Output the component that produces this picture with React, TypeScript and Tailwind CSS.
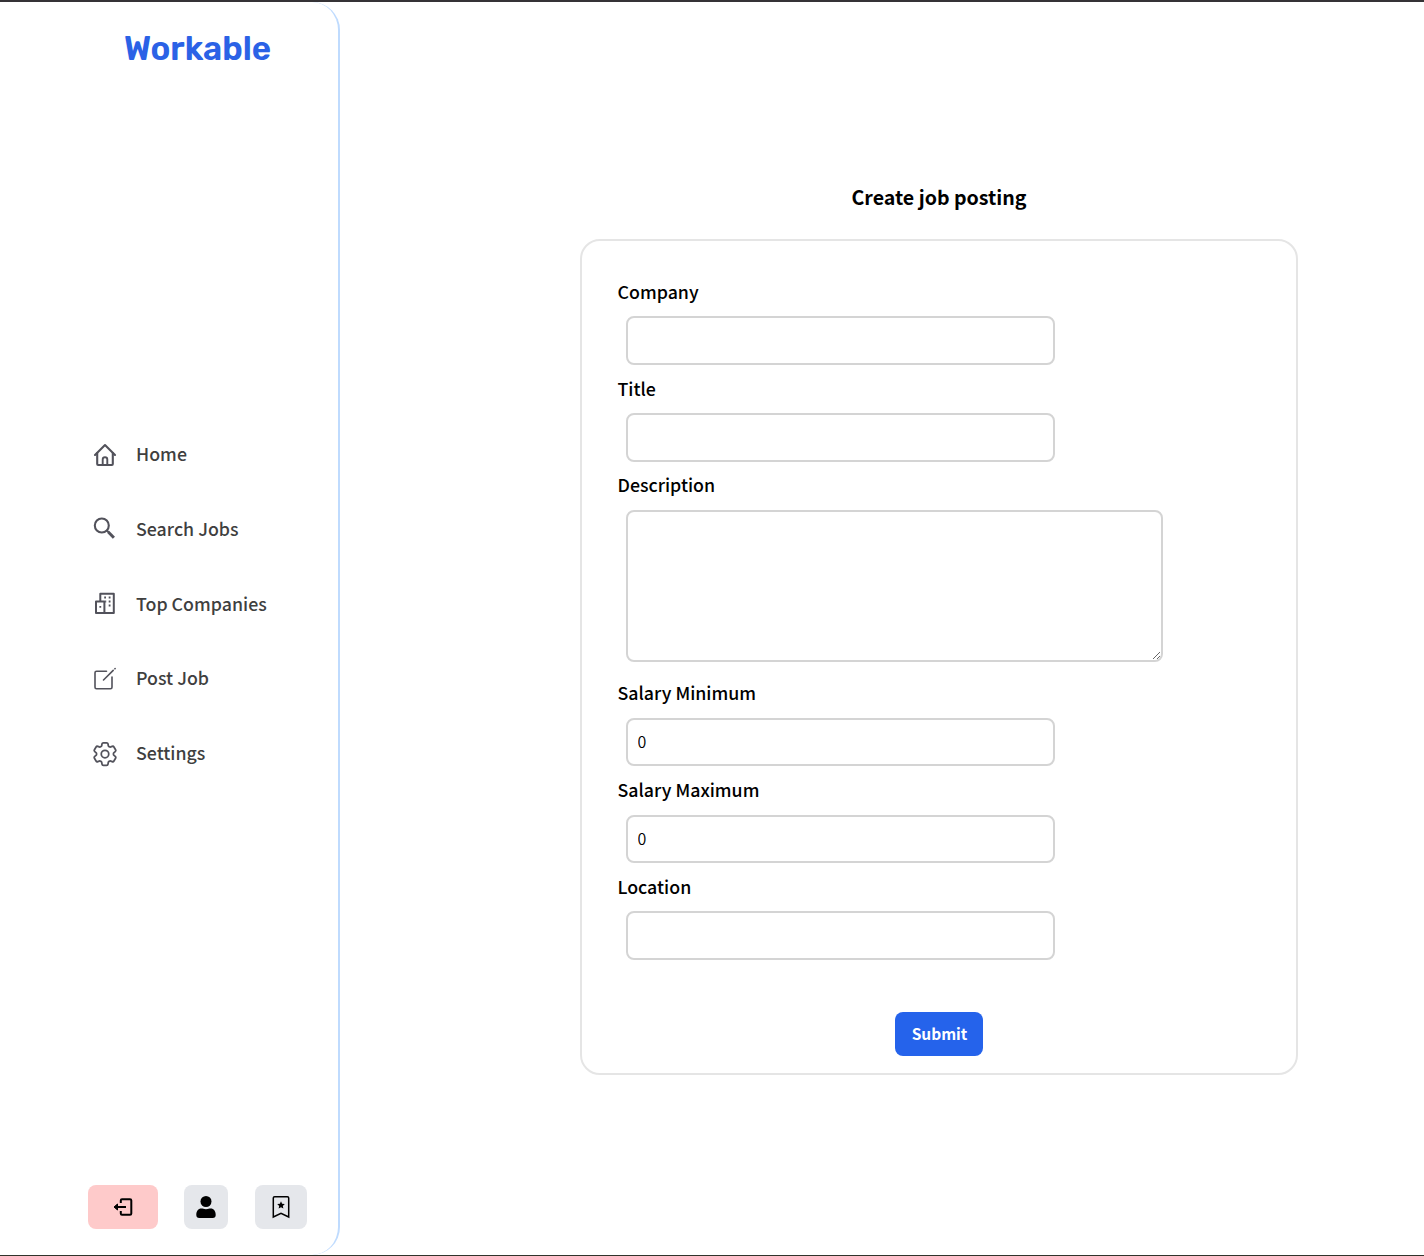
import React from "react";
import { HiOutlineCog6Tooth } from "react-icons/hi2";

const font = "font-['Noto_Sans_CJK_JP','Noto_Sans',sans-serif]";

function HomeIcon() {
  return (
    <svg className="size-6" viewBox="0 0 24 24" fill="none" stroke="currentColor" strokeWidth="2.1" strokeLinejoin="round" strokeLinecap="round">
      <path d="M2 11.9 12 2.1l10 9.8" />
      <path d="M4.2 10v11.1q0 .9.9.9h13.8q.9 0 .9-.9V10" />
      <path d="M9.7 21.8v-5.3a2.3 2.3 0 0 1 4.6 0v5.3" strokeWidth="1.9" />
    </svg>
  );
}

function SearchIcon() {
  return (
    <svg className="size-6" viewBox="0 0 24 24" fill="none" stroke="currentColor">
      <circle cx="8.8" cy="8.5" r="7" strokeWidth="2.1" />
      <path d="M13.800 13.500l2 2" strokeWidth="1.9" />
      <path d="M15.300 15l5.600 5.700" strokeWidth="3" />
    </svg>
  );
}

function CompaniesIcon() {
  return (
    <svg className="size-6" viewBox="0 0 24 24" fill="none" stroke="currentColor" strokeWidth="2" strokeLinejoin="round">
      <path d="M7.300 9.500V1.700h13.500v19.400H3V9.600h8.400v11.500" />
      <path d="M11.200 5.500h1.800M15.700 5.500h1.800M15.700 9.500h1.800M12.200 9.500h1M15.700 13.500h1.800M6.400 14.900h1.800" strokeWidth="1.8" />
    </svg>
  );
}

function PostIcon() {
  return (
    <svg className="size-6" viewBox="0 0 24 24" fill="none" stroke="currentColor" strokeWidth="1.6" strokeLinejoin="round" strokeLinecap="round">
      <path d="M13.500 4.300H3.500Q2 4.300 2 5.800v14.500q0 1.500 1.500 1.500h14q1.500 0 1.500-1.500V10" />
      <path d="M10.500 13 20.200 3.400M21.900 1.800l.2-.2" />
    </svg>
  );
}

function GearIcon() {
  return <HiOutlineCog6Tooth className="-m-[3px] size-[30px] [stroke-width:1.4]" />;
}

const items = [
  { label: "Home", Icon: HomeIcon },
  { label: "Search Jobs", Icon: SearchIcon },
  { label: "Top Companies", Icon: CompaniesIcon },
  { label: "Post Job", Icon: PostIcon },
  { label: "Settings", Icon: GearIcon },
];

function Field({ label, value = "" }: { label: string; value?: string }) {
  return (
    <label className="flex h-[96.8px] flex-col items-start">
      <span className="h-[28px] text-[17.8px] leading-[28px] font-medium">{label}</span>
      <input defaultValue={value} className="mt-[11.4px] ml-[8.5px] h-[48.4px] w-[429px] rounded-lg border-2 border-[#d4d4d4] bg-white px-[9.5px] pb-[2px] text-[16px] font-[350]" />
    </label>
  );
}

export default function App() {
  return (
    <div className={`flex h-[1256px] w-[1424px] overflow-hidden border-t-2 border-b border-t-[#353336] border-b-[#30332b] bg-white text-black ${font}`}>
      <aside className="flex w-[340px] shrink-0 flex-col rounded-r-[28px] border-r-2 border-[#bfdbfe]">
        <h1 className="mt-[27px] ml-[124px] text-[33px] leading-[40px] font-semibold text-[#2b62e6] font-['Rubik','Inter',sans-serif]">Workable</h1>
        <nav className="mt-[370px] ml-[93px] flex flex-col gap-[46.8px]">
          {items.map(({ label, Icon }) => (
            <a key={label} className="flex h-7 items-center gap-[19px] text-[17.8px] leading-7 font-medium">
              <span className="mt-[3px] shrink-0 text-[#52525b]">
                <Icon />
              </span>
              <span className="text-[#3f3f3f]">{label}</span>
            </a>
          ))}
        </nav>
        <div className="mt-auto mb-[26px] ml-[88px] flex h-11 text-black">
          <button className="flex w-[70px] items-center justify-center rounded-lg bg-[#fecaca]">
            <svg className="size-6" viewBox="0 0 24 24" fill="none" stroke="currentColor" strokeWidth="2">
              <path d="M9.8 8V5.500Q9.800 4.300 11 4.300h8q1.300 0 1.300 1.200v13q0 1.200-1.300 1.200h-8q-1.200 0-1.200-1.200V16M15 12H5" />
              <path d="M6.500 9v6L3 12z" fill="currentColor" strokeWidth="1" />
            </svg>
          </button>
          <button className="ml-[26px] flex w-11 items-center justify-center rounded-lg bg-[#e5e7eb]">
            <svg className="size-6" viewBox="0 0 24 24" fill="currentColor">
              <circle cx="12" cy="6.500" r="5.500" />
              <path d="M2.300 20c0-4 2-6.500 5-6.500 1.500 0 2.500.7 4.700.7s3.200-.7 4.700-.7c3 0 5 2.500 5 6.500 0 2-1 3-3 3H5.300c-2 0-3-1-3-3z" />
            </svg>
          </button>
          <button className="ml-[27px] flex w-[52px] items-center justify-center rounded-lg bg-[#e5e7eb]">
            <svg className="size-6" viewBox="0 0 24 24" fill="none" stroke="currentColor" strokeWidth="1.5">
              <path d="M4.300 22V3q0-1.300 1.300-1.300h12.800q1.300 0 1.300 1.300v19L12 18.400z" />
              <path d="m12 6.300 1.100 2.500 2.700.3-2 1.800.6 2.700-2.400-1.400-2.400 1.400.6-2.700-2-1.800 2.700-.3z" fill="currentColor" stroke="none" />
            </svg>
          </button>
        </div>
      </aside>
      <main className="ml-[240px] flex w-[718px] flex-col">
        <h2 className="mt-[181px] h-[28px] text-center text-[19.6px] leading-[28px] font-bold">Create job posting</h2>
        <form className="mt-[28px] flex h-[836px] flex-col rounded-[20px] border-2 border-[#e5e5e5] pt-[36px] pl-[35.5px]">
          <Field label="Company" />
          <Field label="Title" />
          <label className="flex h-[207.8px] flex-col items-start">
            <span className="h-[28px] text-[17.8px] leading-[27px] font-medium">Description</span>
            <textarea className="mt-[11px] ml-[8.5px] h-[152px] w-[537px] resize rounded-lg border-2 border-[#d4d4d4] bg-white" />
          </label>
          <Field label="Salary Minimum" value="0" />
          <Field label="Salary Maximum" value="0" />
          <Field label="Location" />
          <button type="button" className="mt-[43.6px] mr-[35.5px] h-11 w-[88px] shrink-0 self-center rounded-lg bg-[#2563eb] pb-[2px] pl-px text-[15.5px] font-bold text-white">Submit</button>
        </form>
      </main>
    </div>
  );
}
